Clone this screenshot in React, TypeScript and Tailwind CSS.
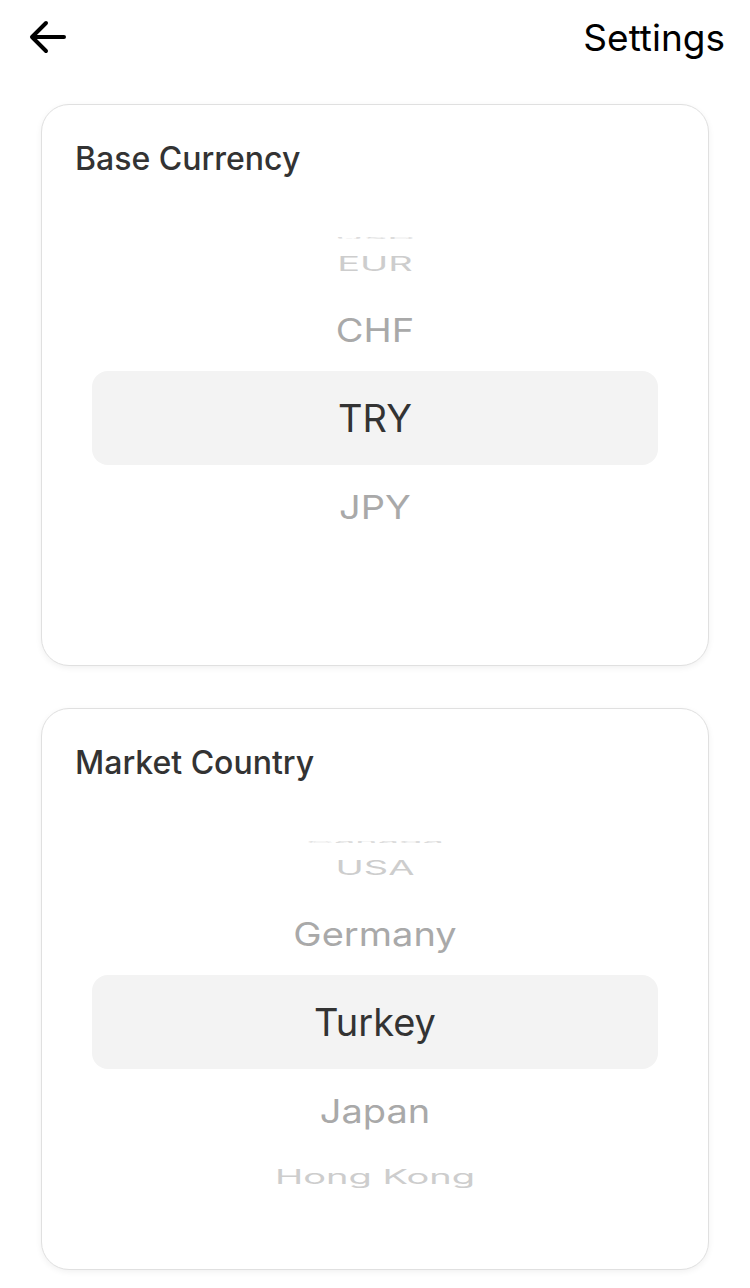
import React from "react";

// Wheel geometry, roughly what the iOS picker draws
const RADIUS = 180;
const STEP = 29.5; // degrees between rows

type WheelProps = {
  items: string[];
  selected: number;
};

function Wheel({ items, selected }: WheelProps) {
  return (
    <div className="mx-[17px] grid h-[364px] place-items-center overflow-hidden">
      <div className="h-[94px] justify-self-stretch rounded-2xl bg-[#f3f3f3] [grid-area:1/1]" />
      {items.map((label, i) => {
        const off = i - selected;
        const deg = off * STEP;
        if (Math.abs(deg) > 90) return null;
        const rad = (deg * Math.PI) / 180;
        const y = RADIUS * Math.sin(rad);
        const s = Math.max(Math.cos(rad), 0.05);
        const dist = Math.abs(off);
        const color =
          dist === 0
            ? "text-[#333333]"
            : dist === 1
            ? "text-[#a9a9a9]"
            : dist === 2
            ? "text-[#cdcdcd]"
            : "text-[#dcdcdc]";
        return (
          <div
            key={label}
            className={`text-[38px] leading-[48px] whitespace-nowrap [grid-area:1/1] ${color}`}
            style={{ transform: `translateY(${y}px) scaleY(${s})` }}
          >
            {label}
          </div>
        );
      })}
    </div>
  );
}

function SettingCard({
  title,
  items,
  selected,
}: {
  title: string;
  items: string[];
  selected: number;
}) {
  return (
    <div className="rounded-[28px] border-[1.5px] border-[#e0e0e0] bg-white px-[33px] pt-[35px] pb-[65px] shadow-[0_2px_6px_rgba(0,0,0,0.06)]">
      <h2 className="text-[32px] leading-[38px] font-medium text-[#333333]">
        {title}
      </h2>
      <div className="mt-[58px]">
        <Wheel items={items} selected={selected} />
      </div>
    </div>
  );
}

export default function App() {
  return (
    <div
      className="min-h-screen bg-white text-black"
      style={{ fontFamily: "Inter, 'Noto Sans', sans-serif" }}
    >
      {/* Top bar */}
      <div className="flex h-[58px] items-end justify-between pl-[28px] pr-[25px]">
        <button aria-label="Back" className="mb-[1px] flex h-[40px] w-[40px] items-center">
          <svg width="40" height="40" viewBox="0 0 40 40" fill="none">
            <path
              d="M36 20H5M18 6 4 20l14 14"
              stroke="#000"
              strokeWidth="4"
              strokeLinecap="round"
              strokeLinejoin="round"
            />
          </svg>
        </button>
        <h1 className="text-[37px] leading-[40px] font-normal">Settings</h1>
      </div>

      <div className="mt-[46px] flex flex-col gap-[42px] px-[41px] pb-[20px]">
        <SettingCard
          title="Base Currency"
          items={["USD", "EUR", "CHF", "TRY", "JPY"]}
          selected={3}
        />
        <SettingCard
          title="Market Country"
          items={["Canada", "USA", "Germany", "Turkey", "Japan", "Hong Kong"]}
          selected={3}
        />
      </div>
    </div>
  );
}
